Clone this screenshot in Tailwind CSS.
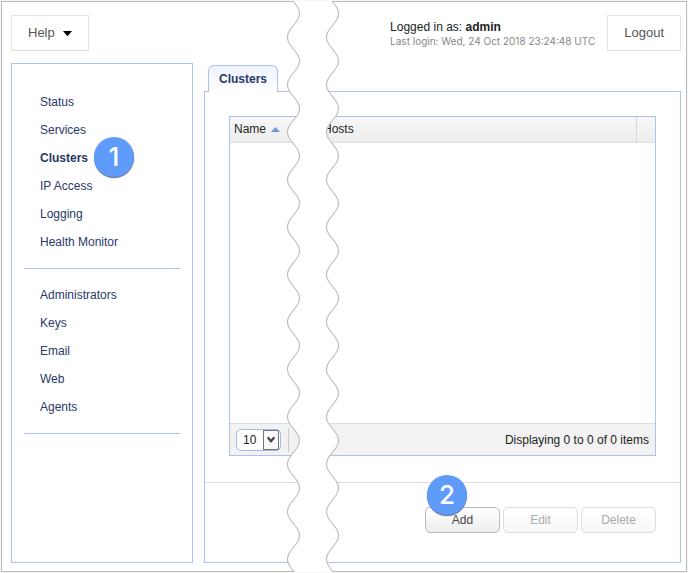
<!DOCTYPE html>
<html lang="en">
<head>
<meta charset="utf-8">
<title>Clusters</title>
<script src="https://cdn.jsdelivr.net/npm/@tailwindcss/browser@4"></script>
</head>
<body class="flex min-h-screen bg-white p-px font-['Liberation_Sans',Arial,sans-serif] text-xs text-[#222]">
<div class="relative flex flex-1 flex-col gap-3 border border-[#bbb] pt-[13px] pr-[5px] pb-2 pl-[9px] shadow-[0_0_1px_#ccc]">

  <header class="flex items-start justify-between">
    <button type="button" class="flex h-9 items-center gap-2 border border-[#e2e2e2] px-4 text-[13px] text-[#555]">Help
      <svg class="h-[5px] w-[9px]" viewBox="0 0 9 5" aria-hidden="true"><path d="M0 0H9L5.2 4.4Q4.5 5 3.8 4.4Z" fill="#000"/></svg>
    </button>
    <div class="flex items-start gap-3">
      <div class="pt-1">
        <p class="leading-4">Logged in as: <strong>admin</strong></p>
        <p class="font-['Inter',sans-serif] text-[10px] leading-3 text-[#888]">Last login: Wed, 24 Oct 2018 23:24:48 UTC</p>
      </div>
      <button type="button" class="h-9 border border-[#e2e2e2] px-4 text-[13px] text-[#555]">Logout</button>
    </div>
  </header>

  <div class="flex flex-1 gap-[11px]">
    <nav class="w-[182px] shrink-0 border border-[#abc3ea] px-3 pt-6 text-[#293869]" aria-label="Settings">
      <ul class="border-b border-[#abc3ea] pb-3 pl-4 leading-7">
        <li><a href="#status">Status</a></li>
        <li><a href="#services">Services</a></li>
        <li class="relative"><a href="#clusters" class="font-bold" aria-current="page">Clusters</a>
          <span class="absolute -top-[7px] left-[54px] flex size-10 items-center justify-center rounded-full bg-[#5f9bfb] font-['Inter','Liberation_Sans',sans-serif] text-[26px] font-medium text-white shadow-[0_1px_1px_#52698c]">1</span>
        </li>
        <li><a href="#ip-access">IP Access</a></li>
        <li><a href="#logging">Logging</a></li>
        <li><a href="#health">Health Monitor</a></li>
      </ul>
      <ul class="border-b border-[#abc3ea] pt-3 pb-3 pl-4 leading-7">
        <li><a href="#administrators">Administrators</a></li>
        <li><a href="#keys">Keys</a></li>
        <li><a href="#email">Email</a></li>
        <li><a href="#web">Web</a></li>
        <li><a href="#agents">Agents</a></li>
      </ul>
    </nav>

    <main class="flex flex-1 flex-col pt-0.5">
      <h1 class="z-1 -mb-px ml-1 h-[27px] self-start rounded-t-md border border-b-0 border-[#abc3ea] bg-linear-to-b from-[#eef3fd] to-white px-2.5 text-xs leading-[26px] font-bold text-[#293869]">Clusters</h1>
      <div class="flex flex-1 flex-col border border-[#abc3ea]">
        <div class="mx-6 mt-6 mb-[26px] flex flex-1 flex-col border border-[#abc3ea]">
          <table class="w-full table-fixed text-left">
            <thead class="bg-linear-to-b from-[#f8f8f8] to-[#ededed]">
              <tr class="h-[25px] border-b border-[#ddd]">
                <th scope="col" aria-sort="ascending" class="w-[89px] pl-1 font-normal">
                  <span class="flex items-center gap-[5px]">Name
                    <svg class="h-[5px] w-[9px]" viewBox="0 0 9 5" aria-hidden="true"><path d="M0 5L4.5 0L9 5Z" fill="#6f97d2"/></svg>
                  </span>
                </th>
                <th scope="col" class="pl-1 font-normal">Hosts</th>
                <td class="w-[19px] border-l border-dotted border-l-[#bbb]"></td>
              </tr>
            </thead>
          </table>
          <div class="flex-1"></div>
          <div class="flex h-8 items-center justify-between border-t border-[#ddd] bg-[#f2f2f2] px-1.5">
            <div class="flex items-center gap-[7px]">
              <div class="relative flex">
                <select aria-label="Items per page" class="h-[22px] w-[45px] appearance-none rounded-[5px] border border-[#9dbce8] bg-white pl-1.5 text-xs"><option>10</option><option>25</option></select>
                <svg class="pointer-events-none absolute top-px right-0.5 h-5 w-4" viewBox="0 0 16 20" aria-hidden="true"><rect x=".5" y=".5" width="15" height="19" fill="#f8f8f8" stroke="#747474"/><path d="M4.7 7.3L8 11.2L11.3 7.3" fill="none" stroke="#444" stroke-width="2.2"/></svg>
              </div>
              <span class="h-6 w-px bg-[#ccc]"></span>
            </div>
            <p>Displaying 0 to 0 of 0 items</p>
          </div>
        </div>
        <div class="flex justify-end gap-[3px] border-t border-[#ddd] px-6 pt-6 pb-[29px]">
          <div class="relative">
            <button type="button" class="h-[26px] w-[75px] rounded-[5px] border border-[#bbb] bg-linear-to-b from-white to-[#ededed] text-[#444]">Add</button>
            <span class="absolute -top-8 left-0.5 flex size-10 items-center justify-center rounded-full bg-[#5f9bfb] font-['Inter','Liberation_Sans',sans-serif] text-[26px] font-medium text-white shadow-[0_1px_1px_#52698c]">2</span>
          </div>
          <button type="button" disabled class="h-[26px] w-[75px] rounded-[5px] border border-[#ddd] bg-linear-to-b from-white to-[#f8f8f8] text-[#aaa]">Edit</button>
          <button type="button" disabled class="h-[26px] w-[75px] rounded-[5px] border border-[#ddd] bg-linear-to-b from-white to-[#f8f8f8] text-[#aaa]">Delete</button>
        </div>
      </div>
    </main>
  </div>

  <svg id="tear" class="pointer-events-none absolute -top-px left-[278px] z-10 h-[calc(100%+2px)] w-[70px]" viewBox="280 1 70 571" preserveAspectRatio="none" aria-hidden="true">
    <path id="gap" fill="#fff"/>
    <path id="edges" fill="none" stroke="#bebebe" stroke-width="1.2"/>
  </svg>
</div>
<script>
  // Torn-page edges: two parallel waves with a blank strip between them.
  const wave = (offset) => {
    const points = [];
    for (let y = 1; y <= 572; y++) {
      const x = 293.5 + offset + 6 * Math.cos((y - 13.5) * 2 * Math.PI / 47.45);
      points.push(x.toFixed(2) + " " + y);
    }
    return points;
  };
  const left = wave(0), right = wave(39);
  document.getElementById("gap").setAttribute("d", "M" + left.join("L") + "L" + [...right].reverse().join("L") + "Z");
  document.getElementById("edges").setAttribute("d", "M" + left.join("L") + "M" + right.join("L"));
</script>
</body>
</html>
